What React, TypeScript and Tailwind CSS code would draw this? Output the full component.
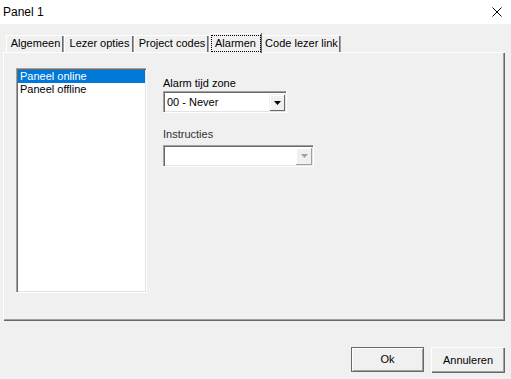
import React from "react";

const font = { fontFamily: '"Liberation Sans", Arial, sans-serif' };

function Tab({ label, width, selected }: { label: string; width: number; selected?: boolean }) {
  if (selected) {
    return (
      <div
        className="relative z-10 -mb-px flex h-[20px] items-start justify-center border-l border-t border-white bg-[#f0f0f0] pt-[1px] shadow-[inset_-1px_0_0_#a0a0a0,1px_0_0_#696969]"
        style={{ width }}
      >
        <div className="flex h-[17px] w-[50px] items-center justify-center border border-dotted border-black text-[11px] leading-none text-black">
          {label}
        </div>
      </div>
    );
  }
  return (
    <div
      className="flex h-[17px] items-center justify-center border-l border-t border-white bg-[#f0f0f0] pb-[1px] text-[11px] leading-none text-black shadow-[inset_-1px_0_0_#a0a0a0,inset_-2px_0_0_#696969]"
      style={{ width }}
    >
      {label}
    </div>
  );
}

function Arrow({ color }: { color: string }) {
  return (
    <svg width="7" height="4" viewBox="0 0 7 4">
      <path d="M0 0H7L3.5 4Z" fill={color} />
    </svg>
  );
}

export default function App() {
  return (
    <div className="relative h-[379px] w-[511px] overflow-hidden bg-[#f0f0f0] text-black" style={font}>
      {/* Title bar */}
      <div className="flex h-[24px] items-center justify-between bg-white pl-[3px] pr-[9px]">
        <span className="text-[12px]">Panel 1</span>
        <svg width="10" height="10" viewBox="0 0 10 10">
          <path d="M0.5 0.5L9.5 9.5M9.5 0.5L0.5 9.5" stroke="#000" strokeWidth="1" />
        </svg>
      </div>

      <div className="flex flex-col pl-[3px]">
        {/* Tabs */}
        <div className="mt-[9px] flex items-end pl-[3px]">
          <Tab label="Algemeen" width={58} />
          <Tab label="Lezer opties" width={70} />
          <Tab label="Project codes" width={75} />
          <Tab label="Alarmen" width={52} selected />
          <Tab label="Code lezer link" width={80} />
        </div>

        {/* Panel */}
        <div className="flex h-[268px] w-[501px] border-l border-t border-white pl-[12px] pt-[15px] shadow-[inset_-1px_-1px_0_#a0a0a0,1px_1px_0_#696969]">
          {/* Listbox */}
          <div className="h-[224px] w-[130px] border-l border-t border-[#a0a0a0] bg-white p-[1px] shadow-[inset_1px_1px_0_#696969,1px_1px_0_#ffffff,inset_-1px_-1px_0_#e3e3e3]">
            <div className="flex h-[13px] items-center bg-[#0078d7] pl-[2px] text-[11px] leading-none text-white">
              Paneel online
            </div>
            <div className="flex h-[13px] items-center pl-[2px] text-[11px] leading-none">Paneel offline</div>
          </div>

          {/* Right column */}
          <div className="ml-[17px] flex flex-col pt-[8px]">
            <div className="h-[14px] text-[11px] leading-[14px]">Alarm tijd zone</div>
            <div className="mt-[1px] flex h-[21px] w-[123px] items-center justify-between border-l border-t border-[#a0a0a0] bg-white pr-[1px] shadow-[inset_1px_1px_0_#696969,1px_1px_0_#ffffff,inset_-1px_-1px_0_#e3e3e3]">
              <span className="pl-[3px] text-[11px] leading-none">00 - Never</span>
              <div className="flex h-[17px] w-[16px] items-center justify-center border-l border-t border-[#f0f0f0] bg-[#f0f0f0] shadow-[inset_-1px_-1px_0_#696969,inset_1px_1px_0_#ffffff]">
                <Arrow color="#000" />
              </div>
            </div>

            <div className="mt-[15px] h-[14px] text-[11px] leading-[14px] text-[#333]">Instructies</div>
            <div className="mt-[4px] flex h-[21px] w-[150px] items-center justify-end border-l border-t border-[#a0a0a0] bg-white pr-[1px] shadow-[inset_1px_1px_0_#696969,1px_1px_0_#ffffff,inset_-1px_-1px_0_#e3e3e3]">
              <div className="flex h-[17px] w-[16px] items-center justify-center bg-[#f0f0f0] shadow-[inset_-1px_-1px_0_#a0a0a0,inset_1px_1px_0_#ffffff]">
                <Arrow color="#a0a0a0" />
              </div>
            </div>
          </div>
        </div>

        {/* Buttons */}
        <div className="mt-[27px] flex justify-end gap-[7px] pr-[7px]">
          <button className="flex h-[25px] w-[73px] items-center justify-center border border-[#696969] bg-[#f0f0f0] text-[11px] shadow-[inset_1px_1px_0_#ffffff,inset_-1px_-1px_0_#a0a0a0]">
            Ok
          </button>
          <button className="flex h-[25px] w-[73px] items-center justify-center border-l border-t border-white bg-[#f0f0f0] text-[11px] shadow-[inset_-1px_-1px_0_#a0a0a0,1px_1px_0_#696969]">
            Annuleren
          </button>
        </div>
      </div>
    </div>
  );
}
